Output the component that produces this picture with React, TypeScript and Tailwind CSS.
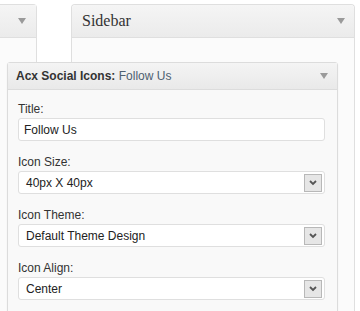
const Arrow = ({ className = "" }: { className?: string }) => (
  <svg width="8" height="6" viewBox="0 0 8 6" className={className}>
    <path d="M0 0h8L4 6z" fill="#9a9a9a" />
  </svg>
);

function SelectField({ label, value }: { label: string; value: string }) {
  return (
    <div className="mb-[13px]">
      <label className="block text-[12px] leading-[16px] text-[#333]">{label}</label>
      <div className="mt-[1px] flex h-[23px] items-center justify-between rounded-[3px] border border-[#dfdfdf] bg-white pl-[7px] pr-[2px]">
        <span className="text-[12px] text-[#222]">{value}</span>
        <span className="flex h-[18px] w-[18px] items-center justify-center border border-[#b8b8b8] bg-[#e6e6e6]">
          <svg width="8" height="6" viewBox="0 0 8 6">
            <path d="M1 1l3 3 3-3" stroke="#555" strokeWidth="1.8" fill="none" />
          </svg>
        </span>
      </div>
    </div>
  );
}

export default function App() {
  return (
    <div
      className="relative h-[311px] w-[360px] overflow-hidden bg-white"
      style={{ fontFamily: '"Liberation Sans", Arial, sans-serif' }}
    >
      <div className="flex h-full pt-[4px]">
        {/* left sortable panel */}
        <div className="flex w-[37px] flex-col rounded-tr-[4px] border-r border-t border-[#dfdfdf]">
          <div className="flex h-[33px] items-center justify-end border-b border-[#dfdfdf] bg-gradient-to-b from-[#f5f5f5] to-[#ebebeb] pr-[10px]">
            <Arrow />
          </div>
          <div className="flex-1 bg-[#fbfbfb]" />
        </div>

        <div className="w-[34px]" />

        {/* sidebar panel */}
        <div className="flex w-[284px] flex-col rounded-t-[4px] border-x border-t border-[#dfdfdf]">
          <div className="flex h-[33px] items-center justify-between rounded-t-[4px] border-b border-[#dfdfdf] bg-gradient-to-b from-[#f5f5f5] to-[#ebebeb] pl-[10px] pr-[9px]">
            <span
              className="text-[16px] text-[#333]"
              style={{ fontFamily: '"Liberation Serif", Georgia, serif' }}
            >
              Sidebar
            </span>
            <Arrow />
          </div>
          <div className="flex-1 bg-[#fbfbfb]" />
        </div>
      </div>

      {/* widget being dragged */}
      <div className="absolute left-[7px] top-[62px] w-[331px] rounded-t-[3px] border border-[#dcdcdc] bg-[#f9f9f9] shadow-[0_1px_2px_rgba(0,0,0,0.06)]">
        <div className="flex h-[27px] items-center justify-between border-b border-[#dcdcdc] bg-gradient-to-b from-[#f4f4f4] to-[#e9e9e9] pl-[8px] pr-[9px]">
          <span className="text-[12px] text-[#333]">
            <b>Acx Social Icons:</b> <span className="text-[#4d6071]">Follow Us</span>
          </span>
          <Arrow />
        </div>
        <div className="pl-[10px] pr-[12px] pt-[11px]">
          <div className="mb-[13px]">
            <label className="block text-[12px] leading-[16px] text-[#333]">Title:</label>
            <div className="mt-[1px] flex h-[23px] items-center rounded-[3px] border border-[#dfdfdf] bg-white pl-[5px] text-[12px] text-[#222]">
              Follow Us
            </div>
          </div>
          <SelectField label="Icon Size:" value="40px X 40px" />
          <SelectField label="Icon Theme:" value="Default Theme Design" />
          <SelectField label="Icon Align:" value="Center" />
        </div>
      </div>
    </div>
  );
}
